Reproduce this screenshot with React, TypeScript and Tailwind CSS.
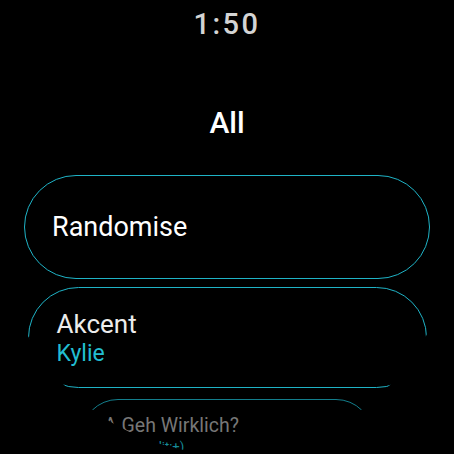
export default function App() {
  return (
    <div className="w-[454px] h-[454px] bg-black">
      <div className="w-[454px] h-[454px] bg-black rounded-full overflow-hidden flex flex-col items-center font-['Roboto',sans-serif]">
        {/* Uhrzeit oben */}
        <div className="mt-[10px] text-[29px] leading-[29px] font-medium tracking-[2.5px] text-[#d4d4d4]">1:50</div>

        {/* Listentitel */}
        <div className="mt-[69px] text-[30px] leading-[30px] font-medium text-white">All</div>

        {/* Listeneinträge */}
        <div className="mt-[37px] w-[406px] h-[104px] shrink-0 rounded-full border border-[#1fb3c6] flex items-center pl-[27px]">
          <span className="text-[27px] leading-[27px] text-white">Randomise</span>
        </div>

        <div className="mt-[8px] w-[399px] h-[101px] shrink-0 rounded-full border border-[#1fb3c6] flex flex-col pl-[28px] pt-[22px]">
          <span className="text-[26px] leading-[29px] text-[#ececec]">Akcent</span>
          <span className="text-[23px] leading-[29px] text-[#22bdd1]">Kylie</span>
        </div>

        <div className="mt-[11px] w-[292px] h-[74px] shrink-0 rounded-full border border-[#137e8c] flex flex-col pl-[22px] pt-[13px]">
          <span className="text-[19.5px] leading-[25px] text-[#777777] whitespace-nowrap">A Geh Wirklich?</span>
          <span className="text-[13px] leading-[18px] text-[#168a99] whitespace-nowrap">Wanda Edit:+)</span>
        </div>
      </div>
    </div>
  );
}
